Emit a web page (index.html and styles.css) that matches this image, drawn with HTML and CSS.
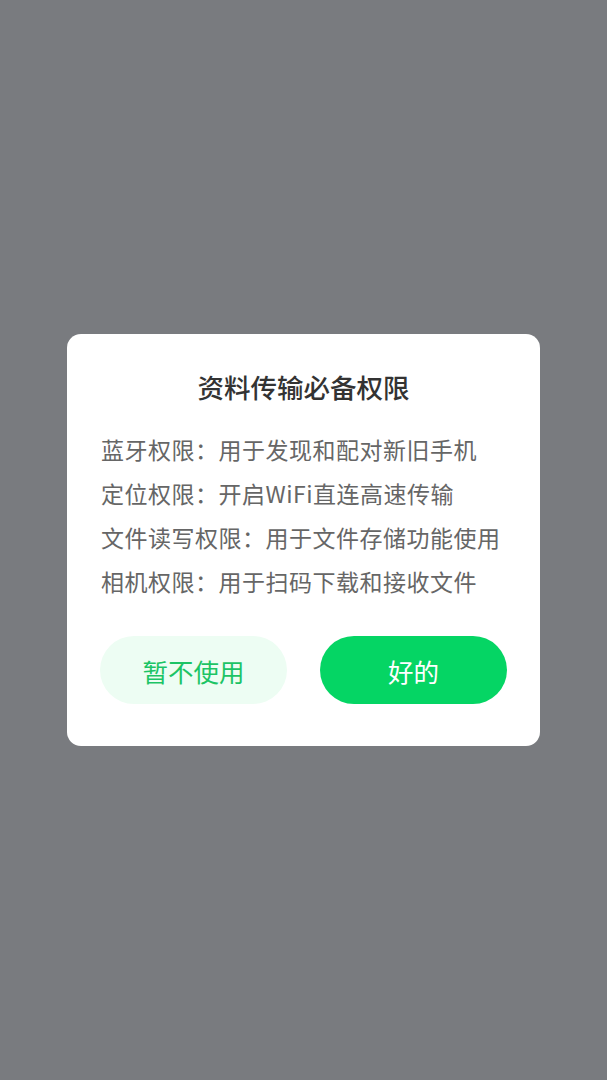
FILE: index.html
```html
<!DOCTYPE html>
<html lang="zh-CN">
<head>
<meta charset="utf-8">
<link rel="stylesheet" href="styles.css">
</head>
<body>
<div class="overlay">
  <div class="dialog">
    <div class="title">资料传输必备权限</div>
    <div class="list">
      <div class="line">蓝牙权限：用于发现和配对新旧手机</div>
      <div class="line">定位权限：开启WiFi直连高速传输</div>
      <div class="line">文件读写权限：用于文件存储功能使用</div>
      <div class="line">相机权限：用于扫码下载和接收文件</div>
    </div>
    <div class="actions">
      <div class="btn btn-light">暂不使用</div>
      <div class="btn btn-primary">好的</div>
    </div>
  </div>
</div>
</body>
</html>
```
FILE: styles.css
```css
html, body {
  margin: 0;
  padding: 0;
}
body {
  font-family: "Noto Sans CJK SC", "Noto Sans", sans-serif;
  background: #797b7f;
}
.overlay {
  width: 607px;
  height: 1080px;
  display: flex;
  align-items: center;
  justify-content: center;
}
.dialog {
  width: 473px;
  box-sizing: border-box;
  background: #ffffff;
  border-radius: 14px;
  padding: 33px 33px 42px;
}
.title {
  text-align: center;
  font-size: 26.5px;
  line-height: 40px;
  font-weight: 500;
  color: #333333;
}
.list {
  margin-top: 20px;
  padding-left: 1px;
}
.line {
  font-size: 23px;
  letter-spacing: 0.5px;
  line-height: 44px;
  color: #666666;
  white-space: nowrap;
}
.actions {
  margin-top: 33px;
  display: flex;
  gap: 33px;
}
.btn {
  flex: 1;
  height: 68px;
  border-radius: 34px;
  display: flex;
  align-items: center;
  justify-content: center;
  font-size: 25.5px;
}
.btn-light {
  background: #edfdf3;
  color: #1cc465;
}
.btn-primary {
  background: #05d564;
  color: #ffffff;
}
```
